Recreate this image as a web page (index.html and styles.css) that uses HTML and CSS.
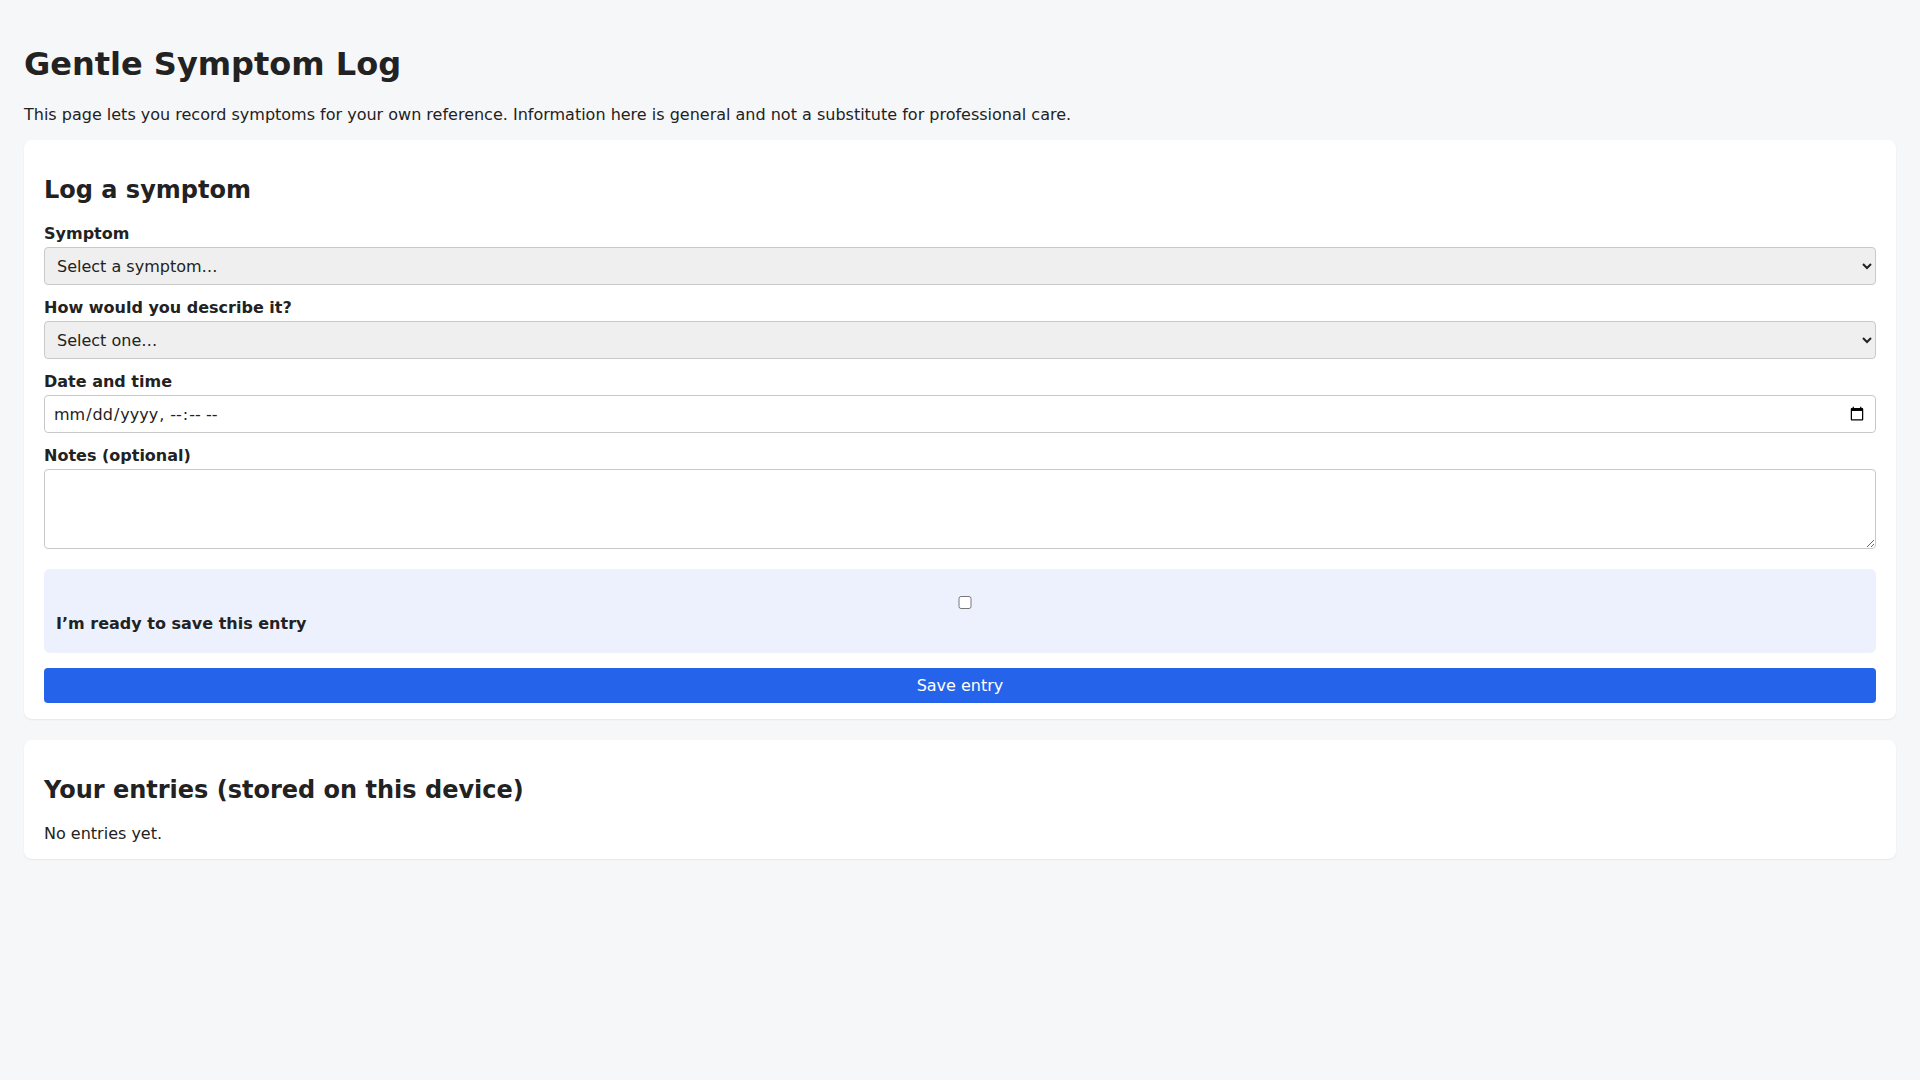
FILE: index.html
```html
<!DOCTYPE html>
<html lang="en">
<head>
<meta charset="utf-8">
<title>Gentle Symptom Log</title>
<link rel="stylesheet" href="styles.css">
</head>
<body>
<main class="page">
  <h1 class="title">Gentle Symptom Log</h1>
  <p class="intro">This page lets you record symptoms for your own reference. Information here is general and not a substitute for professional care.</p>

  <section class="card">
    <h2 class="card-title">Log a symptom</h2>
    <form class="form">
      <label class="label" for="symptom">Symptom</label>
      <select class="control select" id="symptom">
        <option>Select a symptom…</option>
      </select>

      <label class="label" for="describe">How would you describe it?</label>
      <select class="control select" id="describe">
        <option>Select one…</option>
      </select>

      <label class="label" for="when">Date and time</label>
      <input class="control date" id="when" type="datetime-local">

      <label class="label" for="notes">Notes (optional)</label>
      <textarea class="control notes" id="notes"></textarea>

      <div class="consent">
        <input class="consent-box" id="ready" type="checkbox">
        <label class="consent-label" for="ready">I’m ready to save this entry</label>
      </div>

      <button class="save" type="button">Save entry</button>
    </form>
  </section>

  <section class="card">
    <h2 class="card-title">Your entries (stored on this device)</h2>
    <p class="empty">No entries yet.</p>
  </section>
</main>
</body>
</html>
```

FILE: styles.css
```css
* {
  box-sizing: border-box;
}

html, body {
  margin: 0;
  padding: 0;
}

body {
  background: #f6f7f9;
  color: #222;
  font-family: "DejaVu Sans", sans-serif;
  font-size: 16px;
}

.page {
  padding: 24px 24px;
}

.title {
  font-size: 32px;
  font-weight: 700;
  margin: 21px 0 22px;
}

.intro {
  margin: 0 0 16px;
}

.card {
  background: #fff;
  border-radius: 8px;
  box-shadow: 0 1px 2px rgba(0, 0, 0, 0.07);
  padding: 16px 20px;
  margin-bottom: 21px;
}

.card-title {
  font-size: 24px;
  font-weight: 700;
  margin: 20px 0 20px;
}

.form {
  display: flex;
  flex-direction: column;
}

.label {
  display: block;
  font-weight: 700;
  margin-bottom: 4px;
}

.control {
  display: block;
  width: 100%;
  font-family: "DejaVu Sans", sans-serif;
  font-size: 16px;
  color: #222;
  border: 1px solid #c9c9c9;
  border-radius: 4px;
  padding: 8px;
  margin: 0 0 13px;
}

.select {
  height: 38px;
  background-color: #efefef;
}

.date {
  height: 38px;
  background: #fff;
}

.notes {
  height: 80px;
  resize: vertical;
  background: #fff;
  margin-bottom: 20px;
}

.consent {
  background: #edf1fd;
  border-radius: 6px;
  padding: 12px 12px 20px;
  margin-bottom: 15px;
}

.consent-box {
  display: block;
  width: calc(100% - 10px);
  height: 13px;
  margin: 15px 0 5px 10px;
}

.consent-label {
  display: block;
  font-weight: 700;
}

.save {
  display: block;
  width: 100%;
  height: 35px;
  background: #2563eb;
  color: #fff;
  border: none;
  border-radius: 4px;
  font-family: "DejaVu Sans", sans-serif;
  font-size: 16px;
  padding: 8px;
}

.empty {
  margin: 0;
}
```
